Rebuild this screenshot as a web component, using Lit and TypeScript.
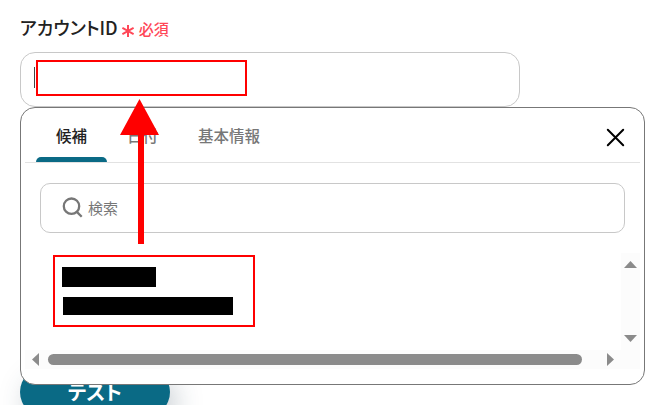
import { LitElement, css, html } from 'lit'
import { customElement, property } from 'lit/decorators.js'

@customElement('suggest-panel')
export class SuggestPanel extends LitElement {
  @property({ type: Array }) tabs = ['候補', '日付', '基本情報']
  @property({ type: Number }) selected = 0

  render() {
    return html`
      <nav>
        <div class="tabs">
          ${this.tabs.map(
            (tab, i) => html`<div class="tab ${i === this.selected ? 'active' : ''}">${tab}</div>`
          )}
        </div>
        <svg class="close" width="19" height="19" viewBox="0 0 19 19">
          <path d="M1.8 1.8L17.2 17.2M17.2 1.8L1.8 17.2" />
        </svg>
      </nav>
      <div class="search">
        <svg class="glass" width="21" height="21" viewBox="0 0 21 21">
          <circle cx="9.5" cy="9.2" r="7.7" />
          <path d="M14.6 14.6L19.7 19.7" />
        </svg>
        <span>検索</span>
      </div>
      <div class="list">
        <div class="items">
          <div class="candidate">
            <div class="mask name"></div>
            <div class="mask detail"></div>
          </div>
        </div>
        <div class="vbar">
          <svg width="13" height="7"><path d="M6.5 0L13 7H0Z" /></svg>
          <svg width="13" height="7"><path d="M0 0H13L6.5 7Z" /></svg>
        </div>
        <div class="hbar">
          <svg width="7" height="13"><path d="M7 0V13L0 6.5Z" /></svg>
          <div class="track"><div class="thumb"></div></div>
          <svg width="7" height="13"><path d="M0 0V13L7 6.5Z" /></svg>
        </div>
      </div>
    `
  }

  static get styles() {
    return css`
      :host {
        display: block;
        box-sizing: border-box;
        width: 625px;
        height: 278px;
        padding: 0 4px;
        border: 1px solid #777;
        border-radius: 15px;
        background: #fff;
      }
      nav {
        display: flex;
        justify-content: space-between;
        box-sizing: border-box;
        height: 55px;
        padding: 0 15px 0 11px;
        border-bottom: 1px solid #e2e2e2;
      }
      .tabs {
        display: flex;
      }
      .tab {
        height: 54px;
        padding: 0 20px;
        font-size: 15.5px;
        font-weight: 500;
        line-height: 55px;
        color: #777;
      }
      .tab.active {
        color: #222;
        position: relative;
      }
      .tab.active::after {
        content: '';
        position: absolute;
        left: 0;
        right: 0;
        bottom: 0;
        height: 5px;
        border-radius: 5px 5px 0 0;
        background: #0a6a85;
      }
      .close {
        margin-top: 20px;
        fill: none;
        stroke: #000;
        stroke-width: 2;
        stroke-linecap: round;
      }
      .search {
        display: flex;
        align-items: center;
        gap: 5px;
        box-sizing: border-box;
        height: 50px;
        margin: 20px 15px;
        padding: 0 21px;
        border: 1px solid #c8c8c8;
        border-radius: 10px;
        font-size: 15px;
        line-height: 20px;
        color: #777;
      }
      .glass {
        margin-top: -2px;
        fill: none;
        stroke: #777;
        stroke-width: 2.3;
      }
      .list {
        display: grid;
        grid-template-columns: 1fr 19px;
        grid-template-rows: 97px 19px;
      }
      .items {
        padding: 2px 28px;
      }
      .candidate {
        display: flex;
        flex-direction: column;
        gap: 10px;
        box-sizing: border-box;
        width: 202px;
        height: 72px;
        padding: 10px 7px;
        border: 2px solid #f00;
      }
      .mask {
        background: #000;
      }
      .name {
        width: 94px;
        height: 20px;
      }
      .detail {
        width: 170px;
        height: 18px;
        margin-left: 1px;
      }
      .vbar,
      .hbar {
        display: flex;
        align-items: center;
        justify-content: space-between;
        background: #fcfcfc;
        fill: #8b8b8b;
      }
      .vbar {
        flex-direction: column;
        box-sizing: border-box;
        padding: 8px 0;
      }
      .hbar {
        grid-column: 1 / 3;
        padding: 0 26px 0 7px;
      }
      .track {
        flex: 1;
        padding: 0 25px 0 9px;
      }
      .thumb {
        height: 11px;
        border-radius: 5.5px;
        background: #8b8b8b;
      }
    `
  }
}

@customElement('app-root')
export class AppRoot extends LitElement {
  render() {
    return html`
      <div class="label">
        <span class="title">アカウントID</span>
        <svg class="star" width="12" height="12" viewBox="0 0 12 12">
          <path d="M6 0V12M0.4 2.8L11.6 9.2M11.6 2.8L0.4 9.2" />
        </svg>
        <span class="required">必須</span>
      </div>
      <div class="field">
        <div class="caret"></div>
        <div class="marker"></div>
      </div>
      <div class="submit">テスト</div>
      <suggest-panel></suggest-panel>
      <svg class="arrow" width="40" height="145" viewBox="0 0 40 145">
        <path d="M19.5 0L39 36H24V145H18V36H0Z" />
      </svg>
    `
  }

  static get styles() {
    return css`
      :host {
        display: block;
        position: relative;
        box-sizing: border-box;
        width: 663px;
        height: 405px;
        padding: 14px 20px 0;
        overflow: hidden;
        background: #fff;
        font-family: 'Noto Sans CJK JP', sans-serif;
      }
      .label {
        display: flex;
        align-items: center;
        height: 26px;
        margin-bottom: 12px;
        white-space: nowrap;
      }
      .title {
        font-size: 18px;
        font-weight: 500;
        font-feature-settings: 'palt';
        color: #222;
      }
      .star {
        margin: 8px 5px 0 4px;
        fill: none;
        stroke: #ff4757;
        stroke-width: 2;
      }
      .required {
        margin-top: 2px;
        font-size: 15px;
        font-weight: 500;
        color: #ff4757;
      }
      .field {
        display: flex;
        box-sizing: border-box;
        width: 500px;
        height: 55px;
        padding: 7px 13px;
        border: 1px solid #c8c8c8;
        border-radius: 15px;
      }
      .caret {
        width: 1px;
        height: 21px;
        margin: 7px 1px 0 0;
        background: #444;
      }
      .marker {
        box-sizing: border-box;
        width: 211px;
        height: 36px;
        border: 2px solid #f00;
      }
      .submit {
        width: 150px;
        height: 50px;
        margin-top: 260px;
        border-radius: 25px;
        background: #0a6a85;
        box-shadow: 6px 10px 28px rgba(40, 60, 80, 0.26);
        color: #fff;
        font-size: 20px;
        font-weight: 700;
        font-feature-settings: 'palt';
        line-height: 50px;
        text-align: center;
      }
      suggest-panel {
        position: absolute;
        left: 20px;
        top: 107px;
      }
      .arrow {
        position: absolute;
        left: 120px;
        top: 99px;
        fill: #f00;
      }
    `
  }
}
